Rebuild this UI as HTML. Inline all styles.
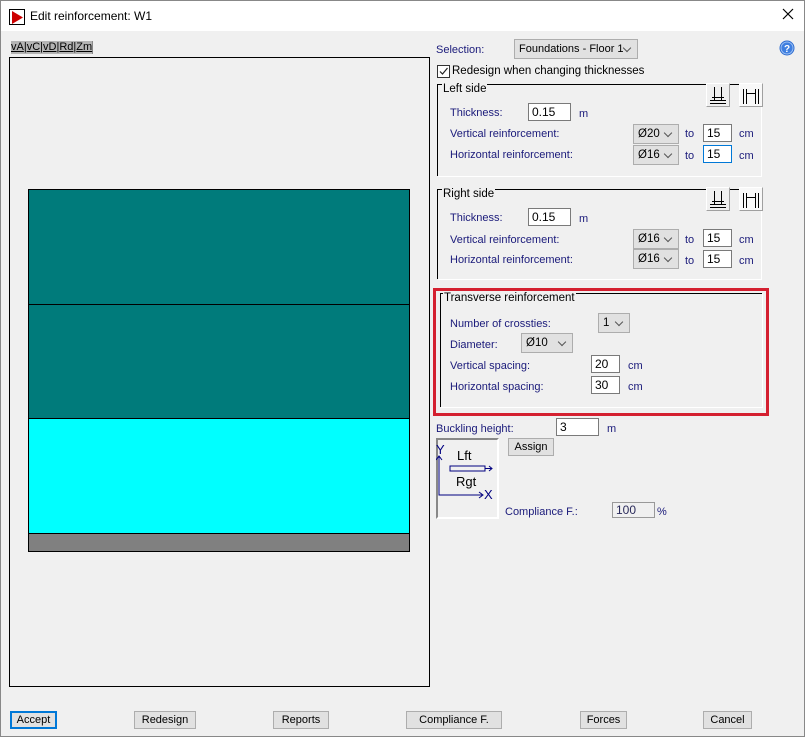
<!DOCTYPE html>
<html><head><style>
*{box-sizing:border-box;margin:0;padding:0}
body{width:805px;height:737px;background:#f0f0f0;font-family:"Liberation Sans",sans-serif;font-size:11px;position:relative;overflow:hidden;color:#000}
div{white-space:nowrap}
.a{position:absolute}
.l{color:#1a1a7a;margin-top:1px}
.inp{position:absolute;background:#fff;border:1px solid #7a7a7a;height:18px;padding:0 3px;line-height:17px;font-size:12px}
.cb{position:absolute;background:#e1e1e1;border:1px solid #adadad;height:20px;padding:0 4px;line-height:19px;font-size:11.5px}
.cb:after{content:"";position:absolute;right:7px;top:5px;width:5px;height:5px;border-right:1px solid #555;border-bottom:1px solid #555;transform:rotate(45deg)}
.btn{position:absolute;background:#e1e1e1;border:1px solid #adadad;height:18px;text-align:center;line-height:17px}
.grp{position:absolute;border-top:1px solid #000;border-left:1px solid #000}
.grp:after{content:"";position:absolute;right:-1px;bottom:-1px;left:0;top:0;border-right:1px solid #fff;border-bottom:1px solid #fff}
.gt{position:absolute;background:#f0f0f0;padding:0 1px;top:-2px;left:4px;font-size:11.5px}
.ib{position:absolute;width:24px;height:24px;background:#f0f0f0;border-left:1px solid #fff;border-top:1px solid #fff;border-right:1px solid #a0a0a0;border-bottom:1px solid #a0a0a0}
</style></head><body>
<div class="a" style="left:0;top:0;width:805px;height:31px;background:#fff"></div>
<div class="a" style="left:0;top:0;width:805px;height:737px;border:1px solid #888"></div>
<div class="a" style="left:9px;top:9px;width:16px;height:16px;border:1px solid #000;background:#fff"></div>
<svg class="a" style="left:11px;top:11px" width="13" height="13"><path d="M1 0 L12 6.5 L1 13Z" fill="#c00"/></svg>
<div class="a" style="left:30px;top:9px;font-size:12px">Edit reinforcement: W1</div>
<svg class="a" style="left:782px;top:8px" width="12" height="12"><path d="M1 1L11 11M11 1L1 11" stroke="#000" stroke-width="1.2"/></svg>

<div class="a" style="left:11px;top:41px;height:13px;background:#b4b4b4;font-size:11px;line-height:13px;border-right:1px solid #888"><span style="text-decoration:underline">vA</span>|<span style="text-decoration:underline">vC</span>|<span style="text-decoration:underline">vD</span>|<span style="text-decoration:underline">Rd</span>|<span style="text-decoration:underline">Zm</span></div>
<div class="a" style="left:9px;top:57px;width:421px;height:630px;border:1px solid #000;background:#f0f0f0"></div>
<div class="a" style="left:28px;top:189px;width:382px;height:116px;background:#007b7b;border:1px solid #000"></div>
<div class="a" style="left:28px;top:304px;width:382px;height:115px;background:#007b7b;border:1px solid #000"></div>
<div class="a" style="left:28px;top:418px;width:382px;height:116px;background:#00ffff;border:1px solid #000"></div>
<div class="a" style="left:28px;top:533px;width:382px;height:19px;background:#808080;border:1px solid #000"></div>

<div class="a l" style="left:436px;top:43px">Selection:</div>
<div class="cb" style="left:514px;top:39px;width:124px;font-size:11px">Foundations - Floor 1</div>
<svg class="a" style="left:779px;top:40px" width="16" height="16"><circle cx="8" cy="8" r="7.5" fill="#2a6ad0"/><circle cx="8" cy="8" r="6" fill="#3f7fe0" stroke="#9cc0f4"/><text x="8" y="12" font-size="10" font-weight="bold" fill="#fff" text-anchor="middle" font-family="Liberation Sans">?</text></svg>
<div class="a" style="left:437px;top:65px;width:13px;height:13px;border:1px solid #333;background:#fff"></div>
<svg class="a" style="left:438px;top:66px" width="11" height="11"><path d="M2 5.5 L4.5 8 L9.5 2" stroke="#222" stroke-width="1.2" fill="none"/></svg>
<div class="a" style="left:452px;top:65px;font-size:11.5px">Redesign when changing thicknesses</div>

<!-- Left side -->
<div class="grp" style="left:437px;top:84px;width:324px;height:92px"><div class="gt">Left side</div></div>
<div class="ib" style="left:706px;top:83px"><svg width="22" height="22"><path d="M7.5 3V16M14.5 3V16M3 16.5H19M3 19.5H19M5 13.5H17" stroke="#000" fill="none"/></svg></div>
<div class="ib" style="left:739px;top:83px;background:#f8f8f8"><svg width="22" height="22"><path d="M3.5 5V20M6.5 5V20M6.5 9.5H15.5M15.5 5V20M18.5 5V20" stroke="#000" fill="none"/></svg></div>
<div class="a l" style="left:450px;top:106px">Thickness:</div>
<div class="inp" style="left:528px;top:103px;width:43px">0.15</div>
<div class="a l" style="left:579px;top:107px">m</div>
<div class="a l" style="left:450px;top:127px">Vertical reinforcement:</div>
<div class="cb" style="left:633px;top:124px;width:46px">Ø20</div>
<div class="a l" style="left:685px;top:127px">to</div>
<div class="inp" style="left:703px;top:124px;width:29px">15</div>
<div class="a l" style="left:739px;top:127px">cm</div>
<div class="a l" style="left:450px;top:148px">Horizontal reinforcement:</div>
<div class="cb" style="left:633px;top:145px;width:46px">Ø16</div>
<div class="a l" style="left:685px;top:149px">to</div>
<div class="inp" style="left:703px;top:145px;width:29px;border-color:#0078d7">15</div>
<div class="a l" style="left:739px;top:149px">cm</div>

<!-- Right side -->
<div class="grp" style="left:437px;top:189px;width:324px;height:90px"><div class="gt">Right side</div></div>
<div class="ib" style="left:706px;top:187px"><svg width="22" height="22"><path d="M7.5 3V16M14.5 3V16M3 16.5H19M3 19.5H19M5 13.5H17" stroke="#000" fill="none"/></svg></div>
<div class="ib" style="left:739px;top:187px;background:#f8f8f8"><svg width="22" height="22"><path d="M3.5 5V20M6.5 5V20M6.5 9.5H15.5M15.5 5V20M18.5 5V20" stroke="#000" fill="none"/></svg></div>
<div class="a l" style="left:450px;top:211px">Thickness:</div>
<div class="inp" style="left:528px;top:208px;width:43px">0.15</div>
<div class="a l" style="left:579px;top:212px">m</div>
<div class="a l" style="left:450px;top:233px">Vertical reinforcement:</div>
<div class="cb" style="left:633px;top:229px;width:46px">Ø16</div>
<div class="a l" style="left:685px;top:233px">to</div>
<div class="inp" style="left:703px;top:229px;width:29px">15</div>
<div class="a l" style="left:739px;top:233px">cm</div>
<div class="a l" style="left:450px;top:253px">Horizontal reinforcement:</div>
<div class="cb" style="left:633px;top:249px;width:46px">Ø16</div>
<div class="a l" style="left:685px;top:254px">to</div>
<div class="inp" style="left:703px;top:250px;width:29px">15</div>
<div class="a l" style="left:739px;top:254px">cm</div>

<!-- Transverse -->
<div class="a" style="left:433px;top:288px;width:336px;height:128px;border:3px solid #d42030"></div>
<div class="grp" style="left:440px;top:293px;width:322px;height:114px"><div class="gt" style="left:2px">Transverse reinforcement</div></div>
<div class="a l" style="left:450px;top:317px">Number of crossties:</div>
<div class="cb" style="left:598px;top:313px;width:32px">1</div>
<div class="a l" style="left:450px;top:338px">Diameter:</div>
<div class="cb" style="left:521px;top:333px;width:52px">Ø10</div>
<div class="a l" style="left:450px;top:359px">Vertical spacing:</div>
<div class="inp" style="left:591px;top:355px;width:29px">20</div>
<div class="a l" style="left:628px;top:359px">cm</div>
<div class="a l" style="left:450px;top:380px">Horizontal spacing:</div>
<div class="inp" style="left:591px;top:376px;width:29px">30</div>
<div class="a l" style="left:628px;top:380px">cm</div>

<div class="a l" style="left:436px;top:422px">Buckling height:</div>
<div class="inp" style="left:556px;top:418px;width:43px">3</div>
<div class="a l" style="left:607px;top:422px">m</div>
<div class="btn" style="left:508px;top:438px;width:46px">Assign</div>
<div class="a" style="left:436px;top:438px;width:63px;height:81px;border-top:2px solid #888;border-left:2px solid #888;background:#f0f0f0;border-right:2px solid #fff;border-bottom:2px solid #fff"></div>
<svg class="a" style="left:436px;top:440px" width="62" height="78" font-family="Liberation Sans" font-size="13">
<path d="M3 16V55H46M43 52L47 55L43 58M0 20L3 16L6 20" stroke="#000080" fill="none"/>
<rect x="14" y="26" width="35" height="5" fill="none" stroke="#000080"/>
<path d="M49 28.5H56M53 26L56 28.5L53 31" stroke="#000080" fill="none"/>
<text x="0" y="14" fill="#000080">Y</text>
<text x="21" y="20" fill="#000">Lft</text>
<text x="20" y="46" fill="#000">Rgt</text>
<text x="48" y="59" fill="#000080">X</text>
</svg>
<div class="a l" style="left:505px;top:505px">Compliance F.:</div>
<div class="a" style="left:612px;top:502px;width:43px;height:16px;border:1px solid #999;background:#f0f0f0;padding-left:3px;line-height:15px;color:#2a2a5a;font-size:12px">100</div>
<div class="a l" style="left:657px;top:505px">%</div>

<div class="btn" style="left:10px;top:711px;width:47px;border:2px solid #0078d7;line-height:15px">Accept</div>
<div class="btn" style="left:134px;top:711px;width:62px">Redesign</div>
<div class="btn" style="left:273px;top:711px;width:56px">Reports</div>
<div class="btn" style="left:406px;top:711px;width:96px">Compliance F.</div>
<div class="btn" style="left:580px;top:711px;width:47px">Forces</div>
<div class="btn" style="left:703px;top:711px;width:49px">Cancel</div>
</body></html>
